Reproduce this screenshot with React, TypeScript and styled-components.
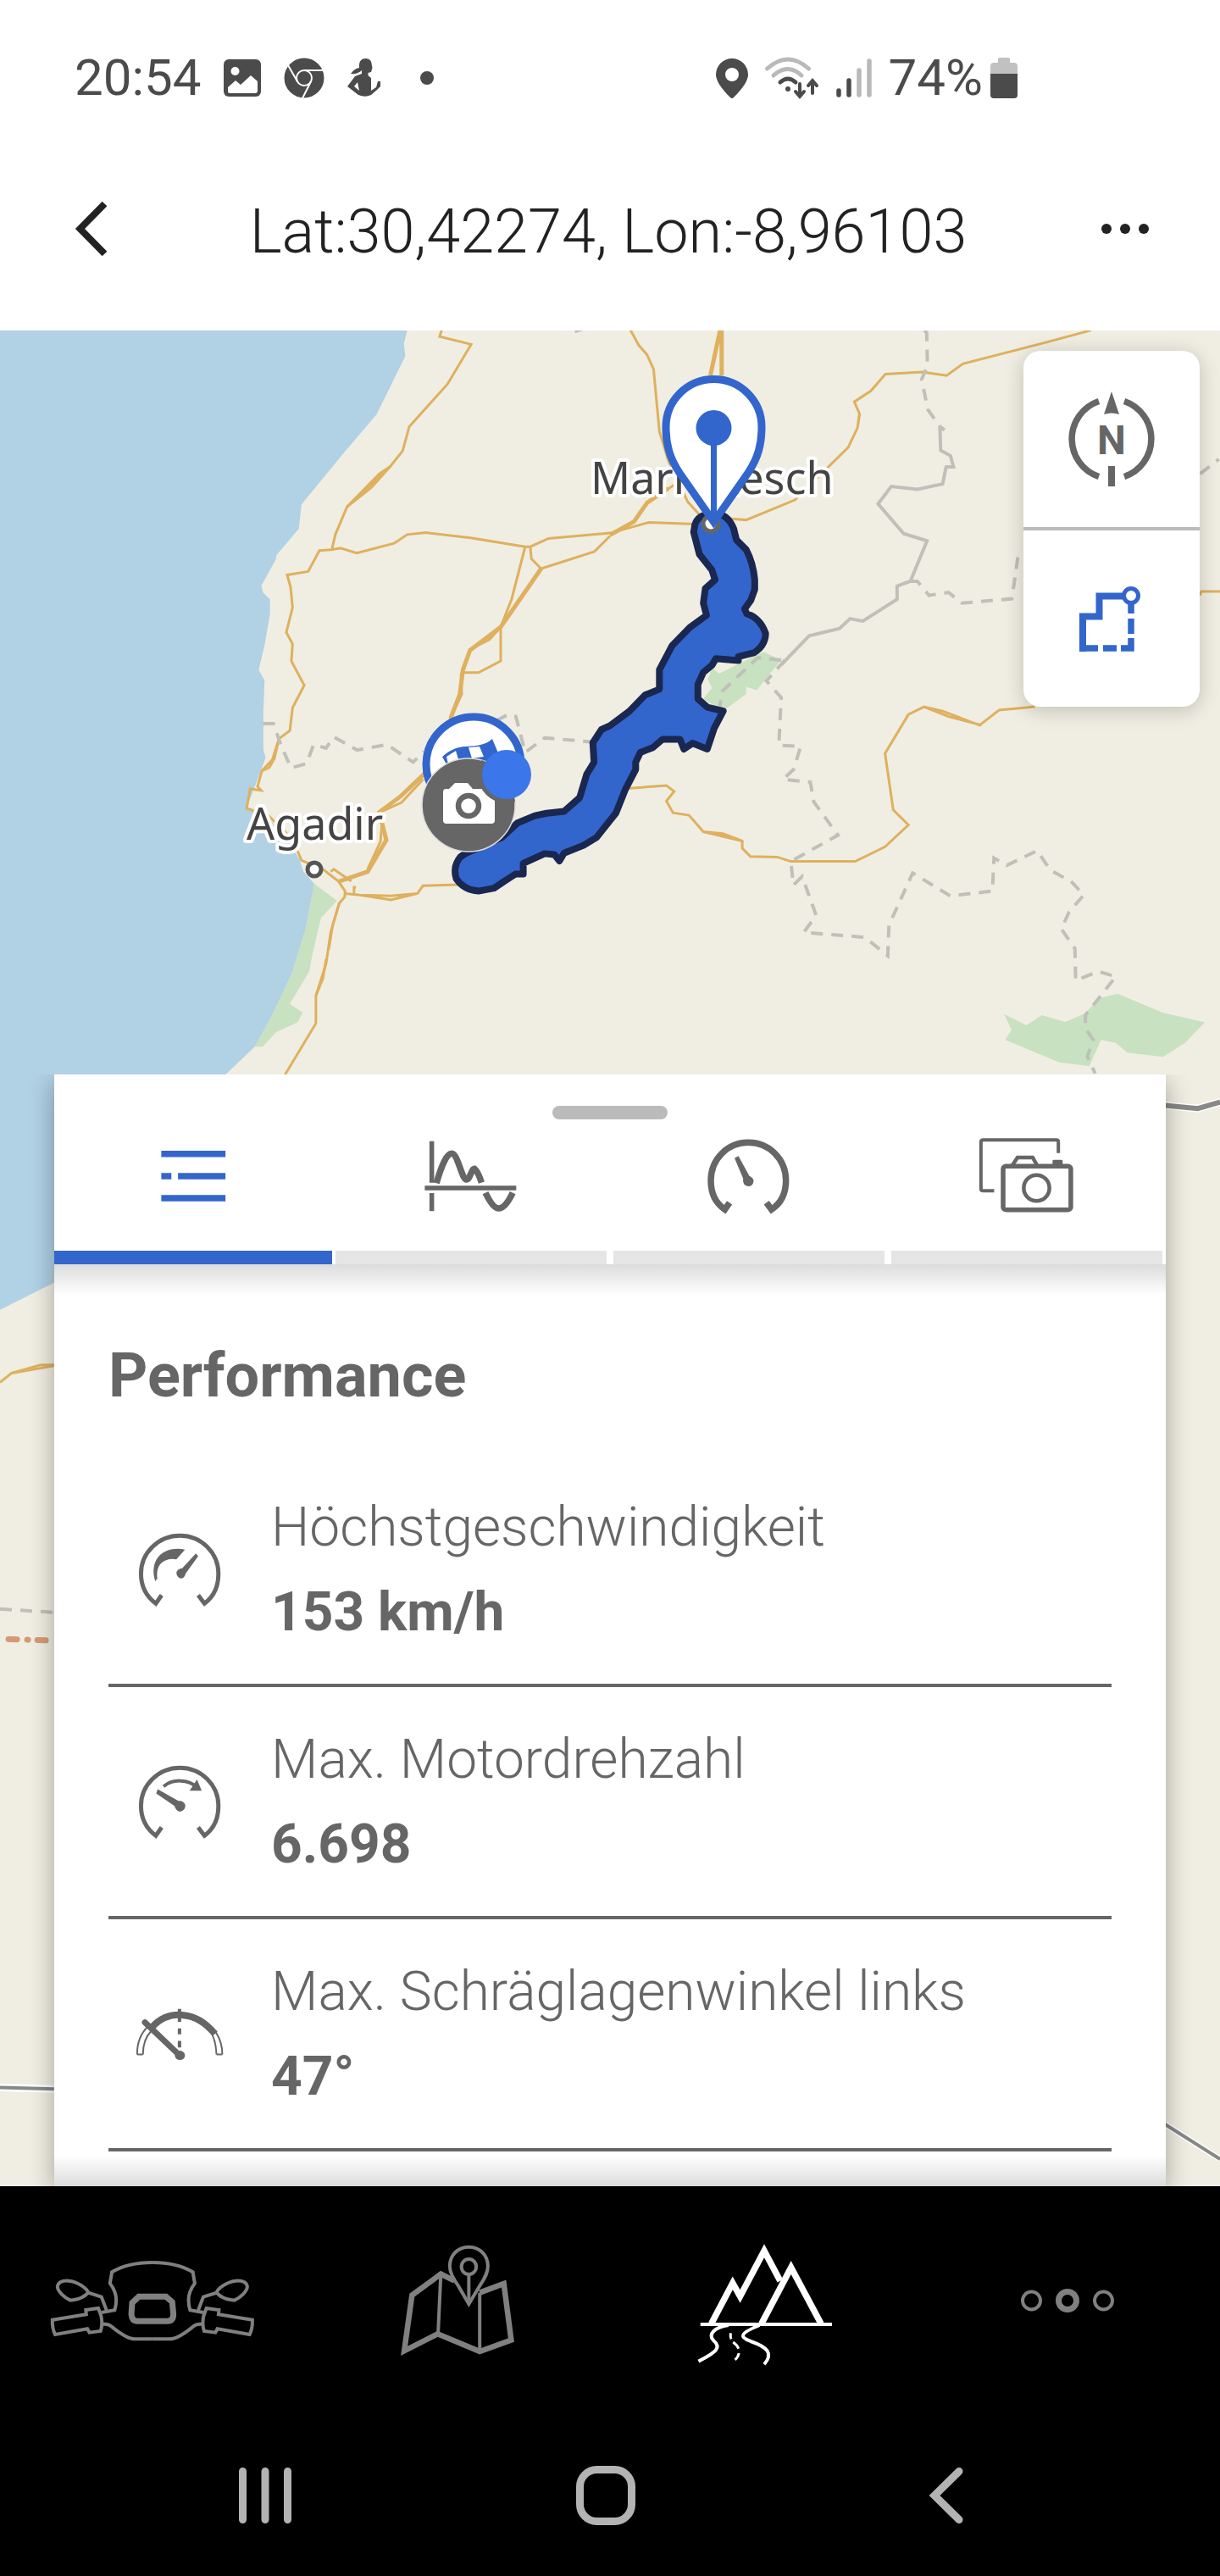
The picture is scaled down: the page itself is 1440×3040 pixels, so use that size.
import React from "react";
import styled, { createGlobalStyle } from "styled-components";

const blue = "#3366cc";
const ink = "#666666";
const statusInk = "#4b4b4b";
const statusFaint = "#b9b9b9";

const GlobalStyle = createGlobalStyle`
  *, *::before, *::after { box-sizing: border-box; }
  body {
    margin: 0;
    background: #000;
    font-family: Roboto, "Noto Sans", sans-serif;
  }
  button {
    margin: 0;
    padding: 0;
    border: 0;
    background: none;
    font: inherit;
    color: inherit;
    cursor: pointer;
  }
  svg { display: block; overflow: visible; flex: none; }
  svg.scaled * { vector-effect: non-scaling-stroke; }
`;

const Screen = styled.div`
  min-height: 100vh;
  display: flex;
  flex-direction: column;
  background: #fff;
`;

/* ---------- top ---------- */

const StatusBar = styled.div`
  height: 150px;
  padding: 34px 239px 0 88px;
  display: flex;
  align-items: center;
  justify-content: space-between;
  color: ${statusInk};
  font-size: 60px;
  line-height: 70px;
`;

const StatusGroup = styled.div<{ $gap: number }>`
  display: flex;
  align-items: center;
  gap: ${(p) => p.$gap}px;
`;

const AppBar = styled.header`
  height: 240px;
  padding: 0 68px 0 64px;
  display: grid;
  grid-template-columns: 88px 1fr 88px;
  align-items: center;
  color: #222;
`;

const BarButton = styled.button`
  height: 88px;
  display: flex;
  align-items: center;
  justify-content: center;
`;

const Title = styled.h1`
  margin: 0;
  padding-top: 8px;
  text-align: center;
  font-size: 72px;
  line-height: 84px;
  font-weight: 300;
  white-space: nowrap;
`;

/* ---------- map ---------- */

const MapArea = styled.main`
  position: relative;
  flex: 1;
  padding: 878px 64px 0;
  overflow: hidden;
  background: #f0eee2;
`;

const MapDrawing = styled.svg`
  position: absolute;
  inset: 0;
  width: 100%;
  height: 100%;
`;

const MapControls = styled.div`
  position: absolute;
  top: 24px;
  right: 24px;
  width: 208px;
  border-radius: 20px;
  background: #fff;
  box-shadow: 0 4px 24px rgba(0, 0, 0, 0.2);
`;

const MapControl = styled.button`
  width: 100%;
  height: 208px;
  display: flex;
  align-items: center;
  justify-content: center;

  & + & {
    height: 212px;
    border-top: 4px solid #bbb;
  }
`;

/* ---------- panel ---------- */

const Panel = styled.section`
  position: relative;
  background: #fff;
  box-shadow: 0 8px 28px rgba(0, 0, 0, 0.32);
  clip-path: inset(0 -64px 0 -64px);
`;

const Handle = styled.div`
  position: absolute;
  top: 37px;
  left: 50%;
  width: 136px;
  height: 16px;
  margin-left: -68px;
  border-radius: 8px;
  background: #bbb;
`;

const Tabs = styled.div`
  display: grid;
  grid-template-columns: repeat(4, 1fr);
`;

const Tab = styled.button<{ $active?: boolean }>`
  height: 224px;
  padding-top: 32px;
  display: flex;
  flex-direction: column;
  align-items: center;
  justify-content: space-between;
  color: ${(p) => (p.$active ? blue : ink)};

  &::after {
    content: "";
    align-self: stretch;
    height: 16px;
    margin: 0 ${(p) => (p.$active ? 0 : 4)}px;
    background: ${(p) => (p.$active ? blue : "#e5e5e5")};
  }
`;

const TabIcon = styled.span`
  height: 176px;
  display: flex;
  align-items: center;
`;

const PanelBody = styled.div`
  padding: 90px 64px 41px;
  background:
    linear-gradient(#dcdcdc, #fff) top / 100% 36px no-repeat,
    linear-gradient(#fff, #dcdcdc) bottom / 100% 36px no-repeat;
  color: ${ink};
`;

const Heading = styled.h2`
  margin: 0 0 51px;
  font-size: 72px;
  line-height: 84px;
  font-weight: 700;
`;

const Stats = styled.dl`
  margin: 0;
`;

const Stat = styled.div`
  padding: 36px 0 34px;
  display: flex;
  align-items: center;
  gap: 24px;
  border-bottom: 4px solid ${ink};
`;

const StatIcon = styled.span`
  width: 168px;
  display: flex;
  justify-content: center;
`;

const StatText = styled.div`
  font-size: 64px;
  line-height: 100px;
`;

const Label = styled.dt`
  font-weight: 300;
`;

const Value = styled.dd`
  margin: 0;
  font-weight: 700;
`;

/* ---------- bottom ---------- */

const AppNav = styled.nav`
  height: 270px;
  display: grid;
  grid-template-columns: repeat(4, 1fr);
  background: #000;
`;

const NavItem = styled.button<{ $active?: boolean }>`
  display: flex;
  align-items: center;
  justify-content: center;
  color: ${(p) => (p.$active ? "#fff" : "#808080")};
`;

const SystemNav = styled.nav`
  height: 190px;
  padding: 0 122px 0 112px;
  display: grid;
  grid-template-columns: repeat(3, 1fr);
  background: #000;
`;

const SystemButton = styled.button`
  display: flex;
  align-items: center;
  justify-content: center;
  color: #b3b3b3;
`;

/* ---------- status icons ---------- */

const PictureIcon = () => (
  <svg width="44" height="44" viewBox="0 0 44 44">
    <rect width="44" height="44" rx="6" fill={statusInk} />
    <circle cx="13.5" cy="14" r="5" fill="#fff" />
    <path d="M5 39V33L14 25L20 30L32 19L40 26V37Q40 40 37 40H7Q5 40 5 38Z" fill="#fff" />
  </svg>
);

const ChromeIcon = () => (
  <svg width="48" height="48" viewBox="0 0 48 48">
    <circle cx="24" cy="24" r="23.5" fill={statusInk} />
    <g stroke="#fff" strokeWidth="2" fill="none">
      <circle cx="24" cy="24" r="9" />
      <path d="M24 15H47M16.2 28.5L5 9M31.8 28.5L22 48" />
    </g>
  </svg>
);

const RunnerIcon = () => (
  <svg width="40" height="46" viewBox="0 0 40 46">
    <path
      d="M14 8C14 3 17 0 21.5 0C26 0 28.5 3 28.5 6L29.5 11L28 16L24.5 17V20L28 23V38L34 34L36 27L39 27L39 33L35 37L28 43Q21 46.5 13 43L0 33L9 21L17 18V14Q12 19 4 18Q8 12 14 11ZM8 33L14 38L12 28Z"
      fill={statusInk}
      fillRule="evenodd"
    />
  </svg>
);

const DotIcon = () => (
  <svg width="36" height="16" viewBox="0 0 36 16">
    <circle cx="27" cy="8" r="8" fill={statusInk} />
  </svg>
);

const LocationIcon = () => (
  <svg width="38" height="47" viewBox="0 0 38 47">
    <path
      d="M19 0A19 19 0 0 1 38 19C38 29 25 42 21 46Q19 48 17 46C13 42 0 29 0 19A19 19 0 0 1 19 0ZM19 11a8 8 0 1 0 0 16a8 8 0 0 0 0-16Z"
      fill={statusInk}
      fillRule="evenodd"
    />
  </svg>
);

const WifiIcon = () => (
  <svg width="64" height="48" viewBox="0 0 64 48" fill="none" strokeLinecap="round">
    <path d="M2.5 13Q27 -9 51.5 13M10 21Q27 6 43 21" stroke={statusFaint} strokeWidth="5" />
    <path d="M18 29Q27 21 36 29" stroke={statusInk} strokeWidth="5" />
    <circle cx="27" cy="37" r="3" fill={statusInk} />
    <path d="M41 31V45M36 40L41 46L46 40M56 42V28M51 33L56 27L61 33" stroke={statusInk} strokeWidth="4" />
  </svg>
);

const SignalIcon = () => (
  <svg width="42" height="46" viewBox="0 0 42 46" strokeLinecap="round" strokeWidth="5.5">
    <path d="M3 38V43M15 26V43" stroke={statusInk} />
    <path d="M27 14V43M39 3V43" stroke={statusFaint} />
  </svg>
);

const BatteryIcon = () => (
  <svg width="32" height="48" viewBox="0 0 32 48">
    <path d="M9 6V2Q9 0 11 0H21Q23 0 23 2V6H28Q32 6 32 10V20H0V10Q0 6 4 6Z" fill="#c1c1c1" />
    <path d="M0 19H32V44Q32 48 28 48H4Q0 48 0 44Z" fill={statusInk} />
  </svg>
);

/* ---------- bar and map control icons ---------- */

const ChevronIcon = () => (
  <svg width="38" height="64" viewBox="0 0 38 64" fill="none" stroke="currentColor" strokeWidth="8">
    <path d="M34.5 2.5L5.5 32L34.5 61.5" />
  </svg>
);

const MoreIcon = () => (
  <svg width="56" height="12" viewBox="0 0 56 12" fill="currentColor">
    <circle cx="6" cy="6" r="6" />
    <circle cx="28" cy="6" r="6" />
    <circle cx="50" cy="6" r="6" />
  </svg>
);

const CompassIcon = () => (
  <svg width="112" height="112" viewBox="0 0 112 112">
    <path d="M71 11.5A47 47 0 0 1 71 100.5M41 11.5A47 47 0 0 0 41 100.5" fill="none" stroke={ink} strokeWidth="7.5" />
    <path d="M56 0L65 27Q56 24 47 27Z" fill={ink} />
    <path d="M56 88V112" stroke={ink} strokeWidth="8" />
    <text x="56" y="74" textAnchor="middle" fill={ink} fontFamily="Roboto, sans-serif" fontWeight="700" fontSize="48">
      N
    </text>
  </svg>
);

const RouteIcon = () => (
  <svg width="76" height="78" viewBox="0 0 76 78" fill="none" stroke={blue}>
    <path d="M52 12.5H23.5V36.5H4V78" strokeWidth="8" />
    <circle cx="61" cy="12" r="8.5" strokeWidth="5" />
    <path d="M61 20V33M61 39V57M61 62V74H49M44 74H28M22 74H4" strokeWidth="7.5" />
  </svg>
);

/* ---------- tab icons ---------- */

const TabSvg = ({ dx, children }: { dx: number; children: React.ReactNode }) => (
  <svg className="scaled" width="112" height="88" viewBox="0 0 112 88" fill="none" stroke="currentColor">
    <g transform={`scale(.4592 .3333) translate(${-dx} -252)`}>{children}</g>
  </svg>
);

const ListIcon = () => (
  <TabSvg dx={374}>
    <path d="M414 305H579M414 384H440M457 384H579M414 462H579" strokeWidth="7.5" />
  </TabSvg>
);

const ChartIcon = () => (
  <TabSvg dx={1090}>
    <path d="M1111 260V407M1111 444V508M1093 426H1328" strokeWidth="5.5" />
    <path d="M1123 409Q1145 304 1162 304C1178 304 1188 396 1200 396C1210 396 1212 358 1221 358Q1230 368 1239 407" strokeWidth="7.5" />
    <path d="M1249 443Q1268 498 1283 498Q1300 498 1319 443" strokeWidth="7.5" />
  </TabSvg>
);

const GaugeIcon = () => (
  <TabSvg dx={237}>
    <path d="M309 478L297 502C271 478 261 440 261 400C261 322 305 265 357 265C410 265 454 322 454 400C454 440 444 478 417 502L404 478" strokeWidth="7.5" />
    <path d="M322 320L332 313L360 383Q371 390 371 402Q369 420 357 420Q345 418 344 402V392Z" fill="currentColor" stroke="none" />
  </TabSvg>
);

const PhotosIcon = () => (
  <TabSvg dx={949}>
    <path d="M1152 302V264Q1152 256 1147 256H959Q953 256 953 264V428Q953 436 959 436H987" strokeWidth="4" />
    <rect x="1010" y="349" width="174" height="154" rx="8" strokeWidth="5.5" />
    <path d="M1034 345L1047 318H1086L1097 345" strokeWidth="4.5" />
    <ellipse cx="1096" cy="426" rx="33" ry="46" strokeWidth="4.5" />
    <path d="M1137 345V330Q1137 326 1141 326H1159Q1163 326 1163 330V345Z" fill="currentColor" stroke="none" />
  </TabSvg>
);

/* ---------- statistic icons ---------- */

const StatSvg = ({ dy, children }: { dy: number; children: React.ReactNode }) => (
  <svg className="scaled" width="104" height="88" viewBox="0 0 104 88" fill="none" stroke={ink}>
    <g transform={`scale(.4592 .5484) translate(-348 ${-dy})`}>{children}</g>
  </svg>
);

const Dial = ({ dy }: { dy: number }) => (
  <g transform={`translate(0 ${dy})`}>
    <path
      d="M415 258L400 276C378 262 362 240 362 212C362 166 408 130 462 130C516 130 561 166 561 212C561 240 548 262 525 276L509 258"
      strokeWidth="5"
    />
  </g>
);

const SpeedIcon = () => (
  <StatSvg dy={124}>
    <Dial dy={0} />
    <path d="M399 228C388 200 398 176 422 165C438 158 458 157 475 160L453 181C440 178 425 181 414 189C404 197 402 210 404 222Z" fill={ink} stroke="none" />
    <path d="M503 168L509 174L477 211Q474 222 464 222Q453 220 453 209Q456 201 468 200Z" fill={ink} stroke="none" />
  </StatSvg>
);

const RevIcon = () => (
  <StatSvg dy={624}>
    <Dial dy={500} />
    <path d="M405 676L401 685L448 712Q453 725 464 724Q476 721 476 711Q473 700 458 701Z" fill={ink} stroke="none" />
    <path d="M420 670C445 652 485 656 503 670" strokeWidth="4" />
    <path d="M506 655L518 679H487Z" fill={ink} stroke="none" />
  </StatSvg>
);

const LeanIcon = () => (
  <StatSvg dy={1123}>
    <path d="M390 1188C430 1150 502 1150 552 1202" strokeWidth="8" />
    <path d="M352 1246C352 1220 362 1200 380 1186M367 1246C367 1225 374 1208 388 1196M352 1246H367M556 1246C555 1225 550 1212 545 1203M571 1246C571 1222 562 1208 554 1198M556 1246H571" strokeWidth="2" />
    <path d="M461 1148V1176M461 1190V1203M461 1217V1231" strokeWidth="4" />
    <path d="M372 1177L461 1248" strokeWidth="7" strokeLinecap="round" />
    <ellipse cx="462" cy="1248" rx="13" ry="10" fill={ink} stroke="none" />
  </StatSvg>
);

/* ---------- navigation icons ---------- */

const HandlebarSide = () => (
  <>
    <path d="M393 327Q330 327 289 361L284 401Q300 430 300 460Q300 480 296 496L262 504" />
    <path d="M275 496L262 449L228 434C210 462 190 458 182 461C168 453 149 430 149 411C152 394 165 391 178 392C200 394 226 420 228 434" />
    <path d="M223 511L136 530Q135 560 143 582L226 562L231 575L260 570Q266 545 261 515L254 489L222 495Z" />
    <path d="M264 546Q280 543 290 556C310 578 330 598 348 598H393" />
  </>
);

const BikeIcon = () => (
  <svg className="scaled" width="240" height="96" viewBox="0 0 240 96" fill="none" stroke="currentColor" strokeWidth="4">
    <g transform="scale(.4592 .3333) translate(-132 -318)">
      <HandlebarSide />
      <g transform="translate(786 0) scale(-1 1)">
        <HandlebarSide />
      </g>
      <path d="M358 448H428L444 467L447 510Q447 534 432 535H354Q340 534 339 510L341 470Z" strokeWidth="7" />
    </g>
  </svg>
);

const MapIcon = () => (
  <svg className="scaled" width="134" height="131" viewBox="0 0 134 131" fill="none" stroke="currentColor" strokeWidth="4">
    <g transform="scale(.4592 .3333) translate(-1030 -267)">
      <path d="M1168 392L1133 368L1059 443L1039 640L1125 580L1233 642L1314 602L1295 402L1233 434" strokeWidth="6.5" />
      <path d="M1133 370L1126 578M1233 434V640M1205 370V470" />
      <path d="M1205 474L1178 410C1162 380 1156 362 1156 340C1156 300 1178 272 1205 272C1232 272 1254 300 1254 340C1254 362 1248 380 1232 412Z" />
      <ellipse cx="1205" cy="342" rx="19" ry="27" />
    </g>
  </svg>
);

const TripsIcon = () => (
  <svg className="scaled" width="164" height="152" viewBox="0 0 164 152" fill="none" stroke="currentColor">
    <g transform="scale(.4592 .3333) translate(-214 -234)">
      <path d="M261 544L316 400L335 447L397 286L438 392" strokeWidth="7.5" />
      <path d="M390 544L466 345L543 544" strokeWidth="7.5" />
      <path d="M233 546H571" strokeWidth="4" />
      <path d="M305 549C270 556 252 580 266 602C288 628 275 644 228 677" strokeWidth="4" />
      <path d="M385 549C330 580 335 592 362 606C408 628 420 650 397 688" strokeWidth="4" />
      <path d="M311 577Q309 588 312 598M317 609Q328 620 331 632M332 648Q330 662 322 672" strokeWidth="3" />
    </g>
  </svg>
);

const DotsIcon = () => (
  <svg width="112" height="28" viewBox="0 0 112 28" fill="none" stroke="currentColor">
    <circle cx="13.5" cy="14" r="10.5" strokeWidth="4" />
    <circle cx="56" cy="14" r="10.5" strokeWidth="7" />
    <circle cx="98.5" cy="14" r="10.5" strokeWidth="4" />
  </svg>
);

const RecentsIcon = () => (
  <svg width="62" height="66" viewBox="0 0 62 66" stroke="currentColor" strokeWidth="9" strokeLinecap="round">
    <path d="M4.5 4.5V61.5M31 4.5V61.5M57.5 4.5V61.5" />
  </svg>
);

const HomeIcon = () => (
  <svg width="70" height="70" viewBox="0 0 70 70" fill="none" stroke="currentColor" strokeWidth="9">
    <rect x="4.5" y="4.5" width="61" height="61" rx="20" />
  </svg>
);

const BackIcon = () => (
  <svg width="40" height="66" viewBox="0 0 40 66" fill="none" stroke="currentColor" strokeWidth="9" strokeLinecap="round">
    <path d="M35 4.5L6 33L35 61.5" />
  </svg>
);

/* ---------- map drawing ---------- */

const road = { stroke: "#dfb05f", strokeWidth: 3, fill: "none" };
const border = { stroke: "#bfc0b9", strokeWidth: 4, fill: "none" };
const dashed = { ...border, strokeDasharray: "14 10" };
const rail = { stroke: "#888", strokeWidth: 4, fill: "none" };
const railCase = { stroke: "#fff", strokeWidth: 9, fill: "none" };

const WestTile = () => (
  <g transform="translate(0 380) scale(.4592 .574)">
    <path
      fill="#b1d1e5"
      d="M0 0H1047V17L1038 45L1042 70L968 190L885 268L775 375L768 425L710 480V487L672 542L676 556L694 570V600L680 665L665 715L680 737L677 800V880L683 895L655 955L633 1000L690 1020L735 1060L770 1105L780 1130L808 1155L785 1250L750 1340L700 1425L655 1490L580 1547L139 1975L0 2031Z"
    />
    <path fill="#c8e1c0" d="M808 1155L866 1190L825 1225L803 1300L795 1335L745 1402L778 1420L765 1440L710 1460L675 1490H655L700 1425L750 1340L785 1250Z" />
    <g {...road}>
      <path d="M1135 17L1130 30L1211 46L1150 128L1052 215L1035 265L1003 297L892 380L862 437L853 468L821 470L792 513L738 520L747 545L752 587L736 638L752 662L749 697L782 747L752 793L745 840L717 857L705 898L692 916L673 923L662 955L671 963L643 960L634 1000L690 1015L735 1050L766 1090L775 1107L830 1125L870 1150L887 1170L886 1182L872 1195L850 1255L838 1320L812 1385V1442L733 1547" />
      <path d="M1003 297L975 312L892 380L955 340L1003 297M853 468L875 465L917 475L1013 455L1047 437L1095 433L1210 444L1350 462L1315 570L1287 627L1391 507L1528 472L1568 440M1350 462H1363L1410 445L1568 434M1363 462L1366 487L1391 507" />
      <path d="M717 857L700 900L673 923M872 1195L855 1240L845 1290M838 1310L830 1350L812 1385" />
      <path d="M1287 627V697L1230 721H1190M1287 627L1258 653L1208 673L1185 725L1187 765L1155 820" />
      <path d="M1391 507L1287 627L1208 675L1190 715L1182 765L1158 815M1092 928L1030 975L975 1008L993 1065L945 1130L872 1150" strokeWidth={5} />
      <path d="M1088 940L1032 988L985 1005M982 1030L978 1068L945 1125M850 1130L858 1125L903 1150M910 1175V1162H915" />
      <path d="M887 1175L925 1178L1005 1188L1073 1175L1087 1159L1180 1157M925 1178L1005 1180L1073 1175" />
      <path d="M0 2180L30 2161L105 2144H139M30 2161L139 2146" />
    </g>
    <path {...dashed} d="M676 826H703L722 870L748 917L788 908L806 869L838 876L858 853L918 880L995 869L1062 905L1090 883M1275 820L1308 806L1326 811L1350 885L1400 855L1530 864M1478 20L1498 14" />
    <path {...dashed} d="M0 2646L139 2653" />
    <path
      stroke="#d49a78"
      strokeWidth={7}
      strokeLinecap="round"
      strokeDasharray="10 12 1 11"
      fill="none"
      d="M22 2708L139 2711"
    />
    <path {...railCase} d="M0 3630L139 3633" />
    <path {...rail} d="M0 3630L139 3633" />
  </g>
);

const EastTile = () => (
  <g transform="translate(720 380) scale(.4592 .574)">
    <g fill="#c8e1c0">
      <path d="M240 775L262 752L252 735L262 710L280 723L395 678L440 695L377 757L350 750V765L290 800Z" />
      <path d="M1013 1423L1070 1446L1110 1425L1170 1439L1220 1422L1260 1390L1305 1381L1420 1420L1529 1440L1478 1482L1422 1511L1330 1502L1300 1482L1262 1476L1232 1530L1155 1522L1016 1476L1032 1455Z" />
    </g>
    <path {...dashed} d="M440 695L380 690L290 758L280 798" />
    <g {...road}>
      <path d="M53 17L74 48L95 67L112 97L127 225L150 285L200 370L240 405M0 438L62 410L95 372L165 335M0 434L100 412L235 416M305 404L350 407L475 366L612 258L636 218L641 188L628 164L670 142L708 107L803 103L865 110L907 86L1120 42L1236 17M636 218L642 188M1516 562L1520 554H1568" />
      <path d="M283 17L258 110M287 17V110M0 438L62 410L95 372L150 342" strokeWidth={5} />
      <path d="M45 959L145 953L165 965L145 985L162 1009L203 1014L240 1048L340 1067V1082L361 1099L430 1100L465 1109H630L707 1079L767 1034L728 1003L707 887L767 807L807 791L855 800L950 829L1000 798L1092 791M240 1048L290 1052L340 1067M807 791L870 811L955 829" />
    </g>
    <path {...dashed} d="M808 17L814 22L816 90L801 118L817 180L848 215L860 222M772 533L790 533L820 562L870 556L905 578L1033 569L1049 480L1064 475M1517 312L1565 282" />
    <path {...border} d="M858 220H848L850 264L875 275L883 298H864L855 333L790 344L723 338L689 374L755 435L815 450L772 533L738 543V570L650 615L617 610L590 630L512 645L440 705" />
    <path {...dashed} d="M450 695L402 738L440 772L434 870L490 873L472 920L445 940L515 946L524 987L586 1055L465 1109L471 1158L494 1140L530 1220L498 1255L655 1265L714 1303L717 1240L778 1133L875 1180L983 1170L987 1102L1020 1117L1098 1087L1132 1127L1185 1150L1218 1178L1180 1213L1160 1248L1195 1288L1197 1354L1255 1335L1300 1346L1222 1425V1452L1242 1476L1227 1510L1247 1545" />
    <path {...railCase} d="M1420 1610L1511 1617L1568 1604" />
    <path {...rail} strokeWidth={6} d="M1420 1610L1511 1617L1568 1604" />
    <path {...railCase} strokeWidth={7} d="M1420 3702L1568 3777" />
    <path {...rail} d="M1420 3702L1568 3777" />
  </g>
);

const Track = () => (
  <g transform="translate(720 380) scale(.4592 .574)">
    <path
      fill={blue}
      stroke="#1a2750"
      strokeWidth={8}
      strokeLinejoin="round"
      d="M218 418Q224 396 262 394Q300 390 318 425L325 448L350 468Q368 495 372 530V550L362 572L346 590L352 600Q385 608 400 640Q400 665 370 680L330 688V696L272 692L262 706L240 720L226 745V775L250 792L291 800L268 835L250 878L212 866L190 878L180 858H135L110 875L78 885L66 905V920L40 960L15 1010L0 1025L-35 1060L-68 1076L-118 1092L-130 1108L-143 1095L-168 1093L-223 1113V1135H-243L-268 1148L-298 1164L-338 1170Q-375 1168 -395 1145Q-405 1120 -385 1100L-372 1093L-278 1060L-238 1030L-193 1015L-163 1010L-118 1006L-78 978L-60 930L-41 905L-44 865L-22 838L0 830L50 800L90 767L127 755V715L160 665L205 628L248 603L240 578L245 548L270 530L262 510L230 478L215 432Z"
    />
  </g>
);

const mapLabel = {
  fontFamily: '"Noto Sans", sans-serif',
  fontSize: 52,
  fill: "#444",
  stroke: "#fff",
  strokeWidth: 8,
  strokeLinejoin: "round" as const,
  paintOrder: "stroke",
};

const MoroccoMap = () => (
  <MapDrawing className="scaled" viewBox="0 390 1440 2190" preserveAspectRatio="xMinYMin slice">
    <defs>
      <clipPath id="photo-disc">
        <circle cx="553" cy="950" r="55" />
      </clipPath>
    </defs>
    <WestTile />
    <EastTile />
    <Track />
    <circle cx="371" cy="1026" r="8" fill="#fff" stroke="#555" strokeWidth="5" />
    <circle cx="839" cy="618" r="9" fill="#fff" stroke="#666" strokeWidth="5" />
    <text x="291" y="991" {...mapLabel}>
      Agadir
    </text>
    <text x="697" y="583" {...mapLabel}>
      Marrakesch
    </text>

    <path d="M842.5 616L802 558C790 540 786 524 786 504A56.5 56.5 0 0 1 899 504C899 524 895 540 883 558Z" fill="#fff" stroke={blue} strokeWidth="9" />
    <circle cx="842.5" cy="505" r="21" fill={blue} />
    <path d="M842.5 505V612" stroke={blue} strokeWidth="7" />

    <circle cx="559" cy="902" r="56" fill="#fff" stroke={blue} strokeWidth="9" />
    <path d="M522 893C545 872 562 888 581 872L592 898C570 906 552 890 527 902Z" fill={blue} />
    <path d="M527 893L538 886L544 906L530 906ZM553 882L566 881L571 893L557 895Z" fill="#fff" />
    <circle cx="553" cy="950" r="55" fill={ink} stroke="#ddd" strokeWidth="1.5" />
    <path
      d="M526 931H530L537 924H552L558 931H580Q584 931 584 935V968Q584 972 580 972H527Q523 972 523 968V935Q523 931 526 931Z"
      fill="#fff"
    />
    <circle cx="553" cy="951" r="12" fill="#fff" stroke={ink} strokeWidth="6.5" />
    <circle cx="598" cy="914" r="34" fill={ink} clipPath="url(#photo-disc)" />
    <circle cx="598" cy="914" r="29" fill="#3b76ea" />
  </MapDrawing>
);

/* ---------- page ---------- */

const tabs = [
  { name: "Liste", icon: <ListIcon /> },
  { name: "Verlauf", icon: <ChartIcon /> },
  { name: "Messwerte", icon: <GaugeIcon /> },
  { name: "Fotos", icon: <PhotosIcon /> },
];

const stats = [
  { label: "Höchstgeschwindigkeit", value: "153 km/h", icon: <SpeedIcon /> },
  { label: "Max. Motordrehzahl", value: "6.698", icon: <RevIcon /> },
  { label: "Max. Schräglagenwinkel links", value: "47°", icon: <LeanIcon /> },
];

const navItems = [
  { name: "Motorrad", icon: <BikeIcon /> },
  { name: "Karte", icon: <MapIcon /> },
  { name: "Fahrten", icon: <TripsIcon /> },
  { name: "Mehr", icon: <DotsIcon /> },
];

const systemItems = [
  { name: "Letzte Apps", icon: <RecentsIcon /> },
  { name: "Startseite", icon: <HomeIcon /> },
  { name: "Zurück", icon: <BackIcon /> },
];

export default function App() {
  const [tab, setTab] = React.useState(0);

  return (
    <Screen>
      <GlobalStyle />
      <StatusBar>
        <StatusGroup $gap={27}>
          <span>20:54</span>
          <PictureIcon />
          <ChromeIcon />
          <RunnerIcon />
          <DotIcon />
        </StatusGroup>
        <StatusGroup $gap={9}>
          <StatusGroup $gap={20}>
            <LocationIcon />
            <WifiIcon />
            <SignalIcon />
            <span>74%</span>
          </StatusGroup>
          <BatteryIcon />
        </StatusGroup>
      </StatusBar>

      <AppBar>
        <BarButton aria-label="Zurück">
          <ChevronIcon />
        </BarButton>
        <Title>Lat:30,42274, Lon:-8,96103</Title>
        <BarButton aria-label="Weitere Optionen">
          <MoreIcon />
        </BarButton>
      </AppBar>

      <MapArea>
        <MoroccoMap />
        <MapControls>
          <MapControl aria-label="Nach Norden ausrichten">
            <CompassIcon />
          </MapControl>
          <MapControl aria-label="Route anzeigen">
            <RouteIcon />
          </MapControl>
        </MapControls>

        <Panel>
          <Handle />
          <Tabs role="tablist">
            {tabs.map((t, i) => (
              <Tab key={t.name} role="tab" aria-label={t.name} aria-selected={i === tab} $active={i === tab} onClick={() => setTab(i)}>
                <TabIcon>{t.icon}</TabIcon>
              </Tab>
            ))}
          </Tabs>
          <PanelBody>
            <Heading>Performance</Heading>
            <Stats>
              {stats.map((s) => (
                <Stat key={s.label}>
                  <StatIcon>{s.icon}</StatIcon>
                  <StatText>
                    <Label>{s.label}</Label>
                    <Value>{s.value}</Value>
                  </StatText>
                </Stat>
              ))}
            </Stats>
          </PanelBody>
        </Panel>
      </MapArea>

      <AppNav>
        {navItems.map((n, i) => (
          <NavItem key={n.name} aria-label={n.name} $active={i === 2}>
            {n.icon}
          </NavItem>
        ))}
      </AppNav>
      <SystemNav>
        {systemItems.map((n) => (
          <SystemButton key={n.name} aria-label={n.name}>
            {n.icon}
          </SystemButton>
        ))}
      </SystemNav>
    </Screen>
  );
}
